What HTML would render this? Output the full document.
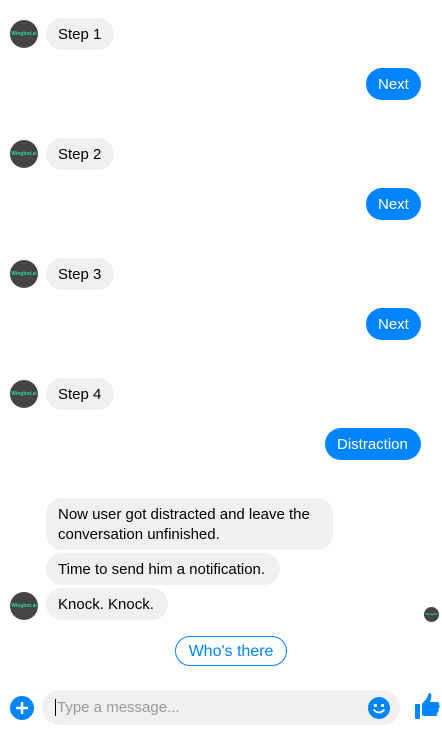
<!DOCTYPE html>
<html><head><style>
body{margin:0;width:442px;height:729px;background:#fff;font-family:"Liberation Sans",Arial,sans-serif;font-size:15px;position:relative;overflow:hidden}
.b{position:absolute;height:32px;line-height:34px;border-radius:16px;padding:0 12px;box-sizing:border-box;white-space:nowrap}
.g{background:#f1f0f0;color:#000}
.u{background:#0084ff;color:#fff}
.av{position:absolute;left:10px;width:28px;height:28px;border-radius:50%;background:#444;color:#2fd3a0;font-size:5px;font-weight:bold;text-align:center;line-height:28px}
</style></head><body>
<div class="av" style="top:20px">Wingbot.ai</div><div class="b g" style="left:46px;top:18px;width:68px">Step 1</div>
<div class="b u" style="left:366px;top:68px;width:55px">Next</div>
<div class="av" style="top:140px">Wingbot.ai</div><div class="b g" style="left:46px;top:138px;width:68px">Step 2</div>
<div class="b u" style="left:366px;top:188px;width:55px">Next</div>
<div class="av" style="top:260px">Wingbot.ai</div><div class="b g" style="left:46px;top:258px;width:68px">Step 3</div>
<div class="b u" style="left:366px;top:308px;width:55px">Next</div>
<div class="av" style="top:380px">Wingbot.ai</div><div class="b g" style="left:46px;top:378px;width:68px">Step 4</div>
<div class="b u" style="left:325px;top:428px;width:96px">Distraction</div>
<div class="b g" style="left:46px;top:498px;width:287px;height:52px;line-height:20px;padding-top:7px;white-space:normal">Now user got distracted and leave the conversation unfinished.</div>
<div class="b g" style="left:46px;top:553px;width:234px">Time to send him a notification.</div>
<div class="av" style="top:592px">Wingbot.ai</div><div class="b g" style="left:46px;top:588px;width:122px">Knock. Knock.</div>
<div class="av" style="left:424px;top:607px;width:15px;height:15px;line-height:15px;font-size:3px">Wingbot</div>
<div class="b" style="left:175px;top:636px;height:30px;line-height:29px;border:1px solid #0084ff;color:#0084ff;width:112px;text-align:center;padding:0;font-size:16px">Who's there</div>
<svg style="position:absolute;left:10px;top:696px" width="24" height="24"><circle cx="12" cy="12" r="12" fill="#0084ff"/><path d="M12 6v12M6 12h12" stroke="#fff" stroke-width="2.5"/></svg>
<div style="position:absolute;left:42px;top:690px;width:358px;height:35px;border-radius:18px;background:#f1f0f0;color:#999;line-height:36px;padding-left:13px;box-sizing:border-box;font-size:15px"><span style="border-left:1px solid #000;padding-left:1px">Type a message...</span></div>
<svg style="position:absolute;left:368px;top:697px" width="22" height="22"><circle cx="11" cy="11" r="11" fill="#0084ff"/><circle cx="7.5" cy="8.5" r="1.6" fill="#fff"/><circle cx="14.5" cy="8.5" r="1.6" fill="#fff"/><path d="M5.5 12.5q5.5 6 11 0" stroke="#fff" stroke-width="1.8" fill="none"/></svg>
<svg style="position:absolute;left:414px;top:693px" width="26" height="27" viewBox="0 0 26 27"><rect x="1" y="11" width="5" height="15" rx="1" fill="#0084ff"/><path d="M8 11l5-6c1-2 1-4 2-5 2 0 3 2 2 5l-1 4h7c2 0 3 2 2 3 1 1 1 3-1 4 1 1 1 3-1 4 1 2-1 3-2 3H10c-1 0-2-1-2-2z" fill="#0084ff"/></svg>
</body></html>
